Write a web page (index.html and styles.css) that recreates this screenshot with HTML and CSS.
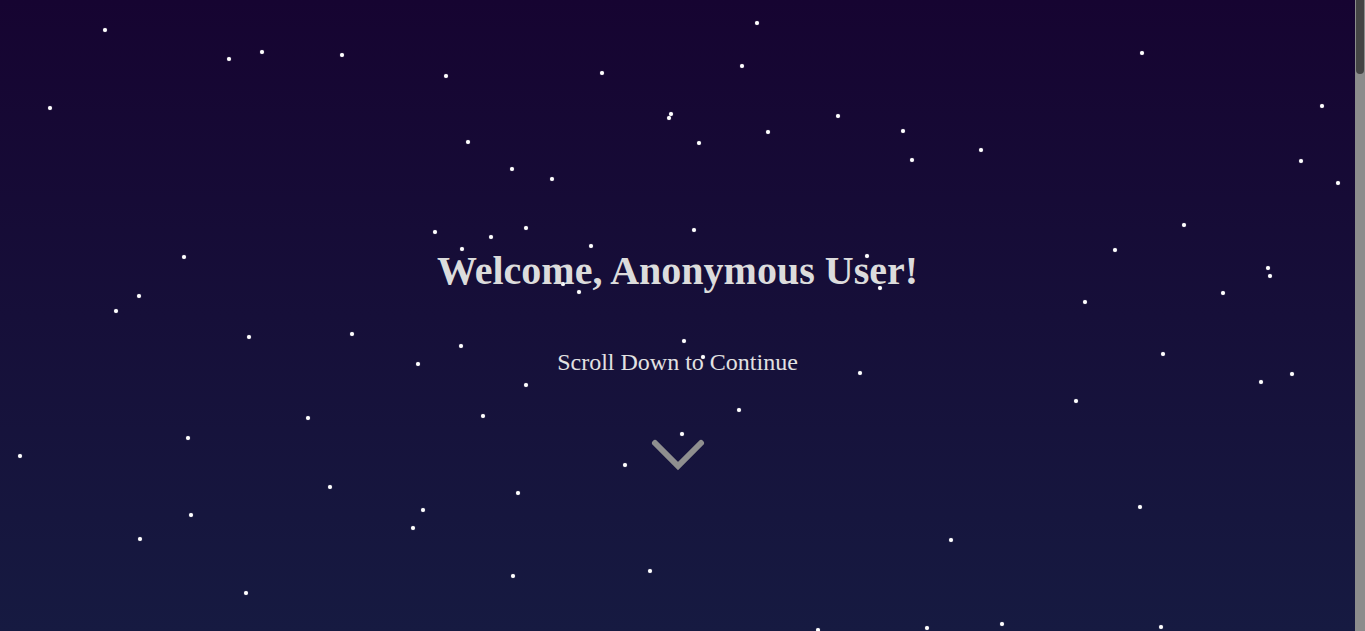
FILE: index.html
```html
<!DOCTYPE html>
<html lang="en">
<head>
<meta charset="utf-8">
<title>Welcome</title>
<link rel="stylesheet" href="styles.css">
</head>
<body>
<main class="page">
<section class="hero">
  <div class="stars" aria-hidden="true">
    <span class="star" style="left:105px;top:30px"></span>
    <span class="star" style="left:229px;top:59px"></span>
    <span class="star" style="left:262px;top:52px"></span>
    <span class="star" style="left:342px;top:55px"></span>
    <span class="star" style="left:446px;top:76px"></span>
    <span class="star" style="left:602px;top:73px"></span>
    <span class="star" style="left:757px;top:23px"></span>
    <span class="star" style="left:742px;top:66px"></span>
    <span class="star" style="left:1142px;top:53px"></span>
    <span class="star" style="left:50px;top:108px"></span>
    <span class="star" style="left:671px;top:114px"></span>
    <span class="star" style="left:669px;top:118px"></span>
    <span class="star" style="left:838px;top:116px"></span>
    <span class="star" style="left:768px;top:132px"></span>
    <span class="star" style="left:903px;top:131px"></span>
    <span class="star" style="left:1322px;top:106px"></span>
    <span class="star" style="left:468px;top:142px"></span>
    <span class="star" style="left:699px;top:143px"></span>
    <span class="star" style="left:912px;top:160px"></span>
    <span class="star" style="left:981px;top:150px"></span>
    <span class="star" style="left:512px;top:169px"></span>
    <span class="star" style="left:552px;top:179px"></span>
    <span class="star" style="left:1301px;top:161px"></span>
    <span class="star" style="left:1338px;top:183px"></span>
    <span class="star" style="left:184px;top:257px"></span>
    <span class="star" style="left:435px;top:232px"></span>
    <span class="star" style="left:462px;top:249px"></span>
    <span class="star" style="left:491px;top:237px"></span>
    <span class="star" style="left:526px;top:228px"></span>
    <span class="star" style="left:591px;top:246px"></span>
    <span class="star" style="left:694px;top:230px"></span>
    <span class="star" style="left:867px;top:256px"></span>
    <span class="star" style="left:880px;top:288px"></span>
    <span class="star" style="left:563px;top:284px"></span>
    <span class="star" style="left:579px;top:292px"></span>
    <span class="star" style="left:1115px;top:250px"></span>
    <span class="star" style="left:1184px;top:225px"></span>
    <span class="star" style="left:1268px;top:268px"></span>
    <span class="star" style="left:1270px;top:276px"></span>
    <span class="star" style="left:1223px;top:293px"></span>
    <span class="star" style="left:1085px;top:302px"></span>
    <span class="star" style="left:139px;top:296px"></span>
    <span class="star" style="left:116px;top:311px"></span>
    <span class="star" style="left:249px;top:337px"></span>
    <span class="star" style="left:352px;top:334px"></span>
    <span class="star" style="left:461px;top:346px"></span>
    <span class="star" style="left:418px;top:364px"></span>
    <span class="star" style="left:684px;top:341px"></span>
    <span class="star" style="left:703px;top:357px"></span>
    <span class="star" style="left:526px;top:385px"></span>
    <span class="star" style="left:860px;top:373px"></span>
    <span class="star" style="left:1163px;top:354px"></span>
    <span class="star" style="left:1261px;top:382px"></span>
    <span class="star" style="left:1292px;top:374px"></span>
    <span class="star" style="left:308px;top:418px"></span>
    <span class="star" style="left:483px;top:416px"></span>
    <span class="star" style="left:739px;top:410px"></span>
    <span class="star" style="left:1076px;top:401px"></span>
    <span class="star" style="left:188px;top:438px"></span>
    <span class="star" style="left:20px;top:456px"></span>
    <span class="star" style="left:682px;top:434px"></span>
    <span class="star" style="left:625px;top:465px"></span>
    <span class="star" style="left:330px;top:487px"></span>
    <span class="star" style="left:518px;top:493px"></span>
    <span class="star" style="left:423px;top:510px"></span>
    <span class="star" style="left:191px;top:515px"></span>
    <span class="star" style="left:413px;top:528px"></span>
    <span class="star" style="left:140px;top:539px"></span>
    <span class="star" style="left:1140px;top:507px"></span>
    <span class="star" style="left:951px;top:540px"></span>
    <span class="star" style="left:513px;top:576px"></span>
    <span class="star" style="left:650px;top:571px"></span>
    <span class="star" style="left:246px;top:593px"></span>
    <span class="star" style="left:818px;top:630px"></span>
    <span class="star" style="left:927px;top:628px"></span>
    <span class="star" style="left:1002px;top:624px"></span>
    <span class="star" style="left:1161px;top:627px"></span>
  </div>
  <div class="hero-content">
    <h1 class="title">Welcome, Anonymous User!</h1>
    <p class="subtitle">Scroll Down to Continue</p>
    <svg class="chevron" width="56" height="40" viewBox="0 0 56 40" aria-hidden="true">
      <polyline points="5,7 28,30 51,7" fill="none" stroke="#8f8f8f" stroke-width="6" stroke-linecap="round" stroke-linejoin="miter"/>
    </svg>
  </div>
</section>
<section class="rest"></section>
</main>
<div class="rail" aria-hidden="true"><div class="rail-thumb"></div></div>
</body>
</html>
```
FILE: styles.css
```css
html, body {
  margin: 0;
  height: 100%;
  background: #171d42;
}
body {
  display: flex;
  overflow: hidden;
  font-family: "Liberation Serif", "Times New Roman", serif;
  color: #dedede;
}
.page {
  flex: 1;
  min-width: 0;
  height: 100%;
  overflow-y: scroll;
  overflow-x: hidden;
  scrollbar-width: none;
}
.page::-webkit-scrollbar {
  display: none;
}
.rail {
  flex: 0 0 10px;
  height: 100%;
  background: #8c8c8c;
}
.rail-thumb {
  height: 74px;
  margin: 0 1px 0 1px;
  background: #444444;
  border-radius: 0 0 4px 4px;
}
.hero {
  position: relative;
  height: 631px;
  overflow: hidden;
  background: linear-gradient(to bottom, #160431 0%, #161a41 100%);
}
.stars {
  position: absolute;
  inset: 0;
}
.star {
  position: absolute;
  width: 4px;
  height: 4px;
  border-radius: 50%;
  background: #ffffff;
  transform: translate(-50%, -50%);
  box-shadow: 0 0 1px rgba(255, 255, 255, 0.6);
}
.hero-content {
  position: relative;
  display: flex;
  flex-direction: column;
  align-items: center;
  padding-top: 248px;
}
.title {
  margin: 0;
  font-size: 40px;
  line-height: 46px;
  font-weight: bold;
  color: #dcdcdc;
}
.subtitle {
  margin: 54px 0 0;
  font-size: 24px;
  line-height: 28px;
  color: #e2e2e2;
}
.chevron {
  margin-top: 60px;
  display: block;
}
.rest {
  height: 4750px;
  background: #171d42;
}
```
